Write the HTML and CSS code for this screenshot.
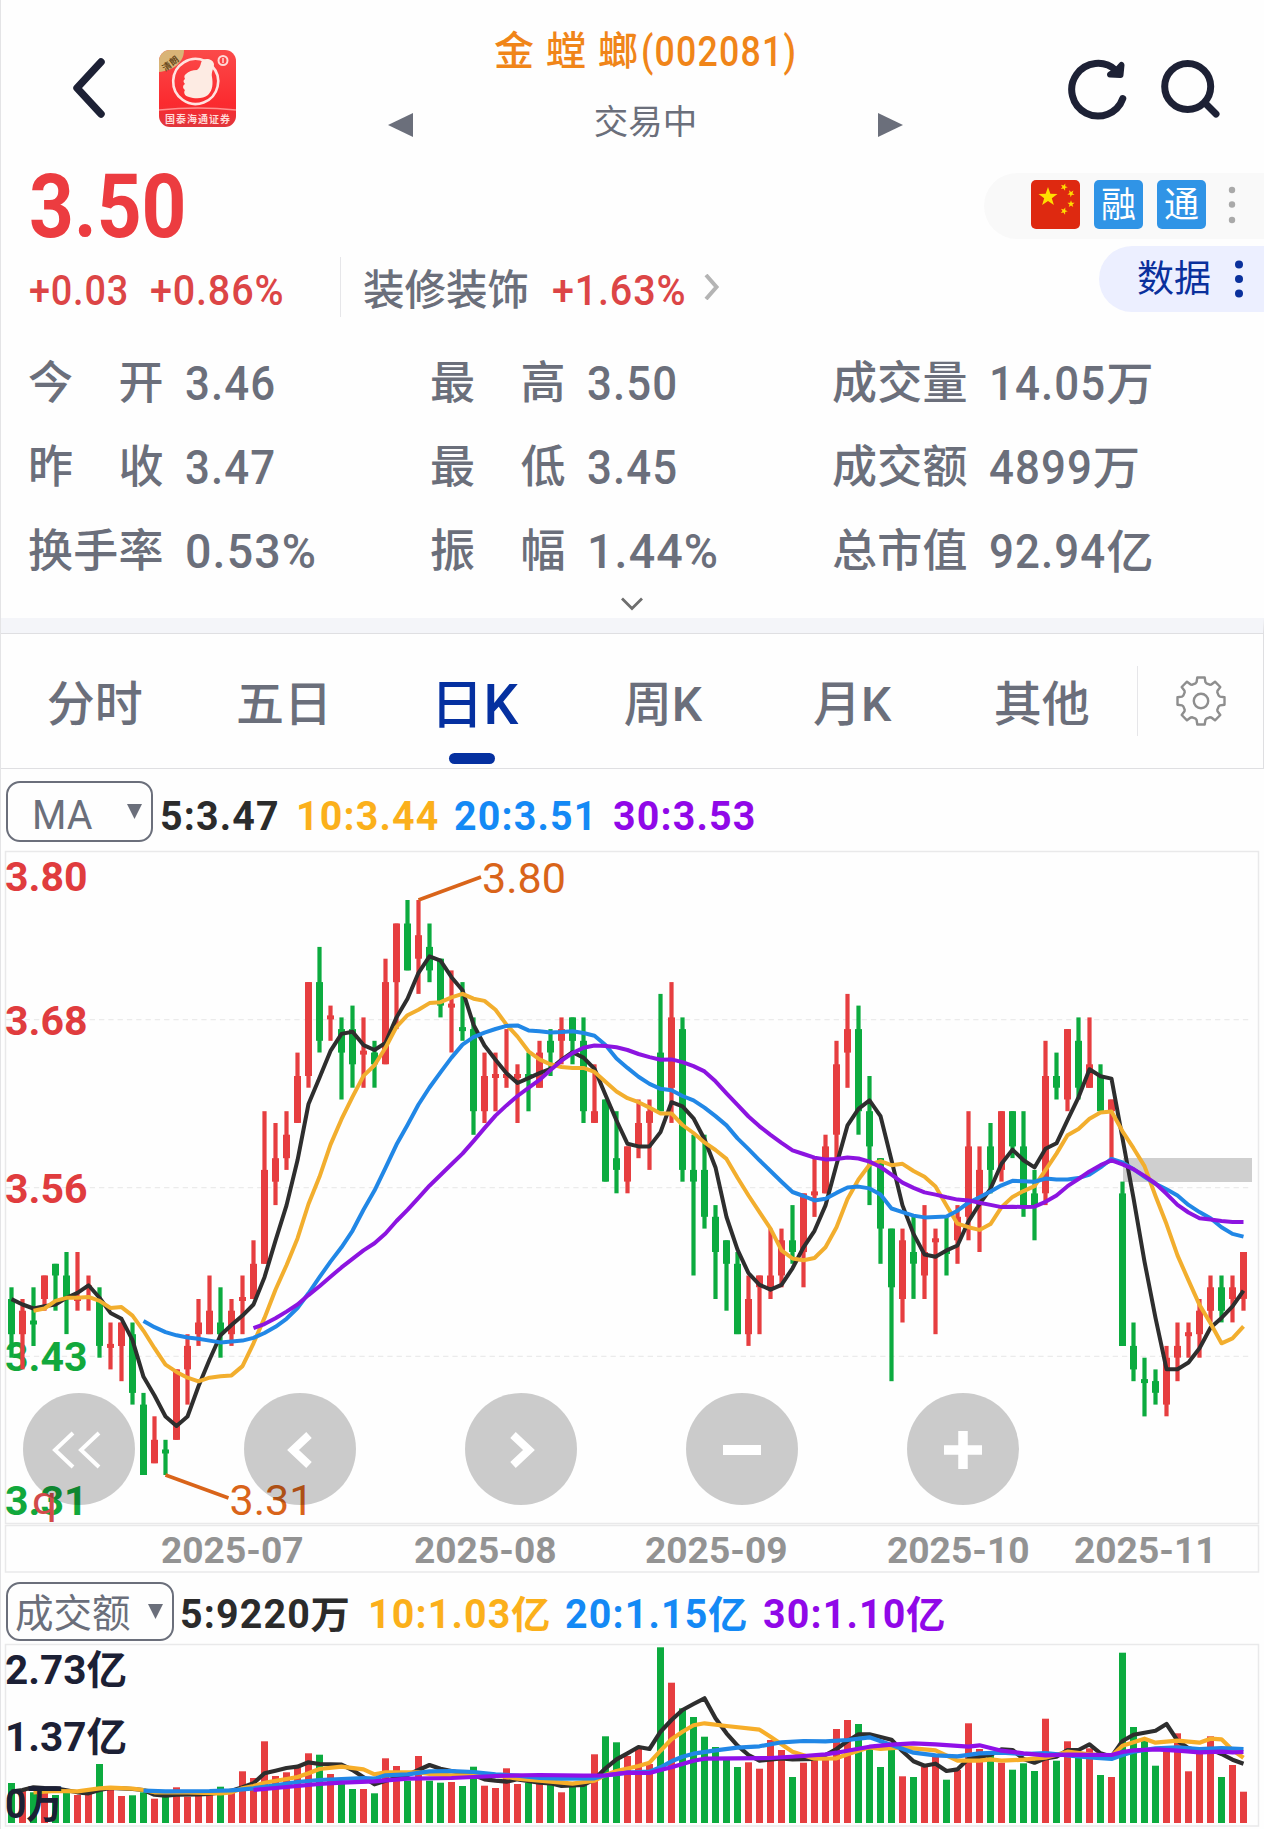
FILE: index.html
```html
<!DOCTYPE html>
<html lang="zh-CN">
<head>
<meta charset="utf-8">
<title>金螳螂 002081</title>
<link rel="stylesheet" href="styles.css">
</head>
<body>
<div class="app">
  <header class="top">
    <div class="top-left">
      <svg class="back" width="34" height="62" viewBox="0 0 34 62"><path d="M30 5 6 31 30 57" fill="none" stroke="#1d2135" stroke-width="7.500" stroke-linecap="round" stroke-linejoin="round"/></svg>
      <svg class="logo" width="77" height="77" viewBox="0 0 77 77">
        <defs>
          <linearGradient id="lg" x1="0" y1="0" x2="0" y2="1"><stop offset="0" stop-color="#fb4a4a"/><stop offset=".7" stop-color="#fb2a2f"/><stop offset="1" stop-color="#e0363c"/></linearGradient>
          <clipPath id="lc"><rect width="77" height="77" rx="11"/></clipPath>
        </defs>
        <g clip-path="url(#lc)">
          <rect width="77" height="77" fill="url(#lg)"/>
          <path d="M0 0H25C25 14 12 21 0 22Z" fill="#d9b477"/>
          <text x="2" y="19" class="logo-tag" transform="rotate(-38 8 14)">清朗</text>
          <path d="M46 11A22.500 22.500 0 1 0 53 16" fill="none" stroke="#ffe3e0" stroke-width="2.600"/>
          <path d="M27 24q4-4 11-4 3-2 4-7c1-6 12-5 13 1 0 4-3 8-2 13 1 6 1 13-4 18-5 4-13 4-19 2-4-1-6-4-4-7-3-2-2-5 0-6-2-2-2-4 0-5-1-2-1-4 1-5Z" fill="#fdebe3"/>
          <circle cx="64" cy="10.500" r="4.500" fill="none" stroke="#ffd9d6" stroke-width="2"/><path d="M64 8v5" stroke="#ffd9d6" stroke-width="1.500"/>
          <path d="M0 60Q39 56 77 60" fill="none" stroke="#ff8f8f" stroke-width="1.500"/>
          <text x="6" y="72.500" class="logo-name" textLength="65">国泰海通证券</text>
        </g>
      </svg>
    </div>
    <div class="top-mid">
      <h1 class="title"><span class="cn">金</span><span class="cn">螳</span><span class="cn">螂</span><span class="code">(002081)</span></h1>
      <div class="switch">
        <svg width="25" height="24" viewBox="0 0 25 24"><path d="M25 0V24L0 12Z" fill="#6b6f7b"/></svg>
        <span class="status">交易中</span>
        <svg width="25" height="24" viewBox="0 0 25 24"><path d="M0 0V24L25 12Z" fill="#6b6f7b"/></svg>
      </div>
    </div>
    <div class="top-right">
      <svg width="60" height="64" viewBox="1067 57 60 64" fill="none" stroke="#1d2135" stroke-width="7" stroke-linecap="round" stroke-linejoin="round"><path d="M1122.800 98.500A26.300 26.300 0 1 1 1116 70.500"/><path d="M1121.500 65 1120.500 75 1110 74.500 1117 70Z" stroke-width="6" fill="#1d2135"/></svg>
      <svg width="60" height="64" viewBox="1160 57 60 64" fill="none" stroke="#1d2135" stroke-width="7" stroke-linecap="round"><circle cx="1187.700" cy="86.500" r="23"/><path d="M1206 104 1216 114"/></svg>
    </div>
  </header>

  <section class="quote">
    <div class="quote-left">
      <div class="price">3.50</div>
      <div class="change">
        <span class="chg c1">+0.03</span><span class="chg c2">+0.86%</span>
        <span class="industry">装修装饰</span><span class="chg c3">+1.63%</span>
        <svg class="more" width="17" height="26" viewBox="0 0 17 26"><path d="M3 1 13.500 13 3 25" fill="none" stroke="#b4b4b4" stroke-width="4"/></svg>
      </div>
    </div>
    <div class="quote-right">
      <div class="tags">
        <svg width="49" height="49" viewBox="0 0 49 49"><defs><path id="star" d="M0-10 2.350-3.240 9.510-3.090 3.800 1.240 5.880 8.090 0 4-5.880 8.090-3.800 1.240-9.510-3.090-2.350-3.240Z" fill="#ffde00"/></defs><rect width="49" height="49" rx="5" fill="#de2910"/><use href="#star" transform="translate(17 17)"/><use href="#star" transform="translate(33 7) rotate(20) scale(.38)"/><use href="#star" transform="translate(40 13.500) rotate(40) scale(.38)"/><use href="#star" transform="translate(40 24) scale(.38)"/><use href="#star" transform="translate(33 31) rotate(20) scale(.38)"/></svg>
        <span class="tag">融</span><span class="tag">通</span>
        <svg class="dots" width="8" height="38" viewBox="0 0 8 38" fill="#a9a9a9"><circle cx="4" cy="4" r="3.200"/><circle cx="4" cy="18.500" r="3.200"/><circle cx="4" cy="34" r="3.200"/></svg>
      </div>
      <div class="data-btn"><span>数据</span><svg width="10" height="38" viewBox="0 0 10 38" fill="#0a309c"><circle cx="5" cy="4.500" r="4"/><circle cx="5" cy="19" r="4"/><circle cx="5" cy="33.500" r="4"/></svg></div>
    </div>
  </section>

  <section class="stats">
    <dl><dt><i>今</i><i>开</i></dt><dd>3.46</dd></dl>
    <dl><dt><i>最</i><i>高</i></dt><dd>3.50</dd></dl>
    <dl><dt><i>成</i><i>交</i><i>量</i></dt><dd>14.05<b>万</b></dd></dl>
    <dl><dt><i>昨</i><i>收</i></dt><dd>3.47</dd></dl>
    <dl><dt><i>最</i><i>低</i></dt><dd>3.45</dd></dl>
    <dl><dt><i>成</i><i>交</i><i>额</i></dt><dd>4899<b>万</b></dd></dl>
    <dl><dt><i>换</i><i>手</i><i>率</i></dt><dd class="pct">0.53%</dd></dl>
    <dl><dt><i>振</i><i>幅</i></dt><dd class="pct">1.44%</dd></dl>
    <dl><dt><i>总</i><i>市</i><i>值</i></dt><dd>92.94<b>亿</b></dd></dl>
    <svg class="expand" width="24" height="14" viewBox="0 0 24 14"><path d="M2 1.500 12 11.500 22 1.500" fill="none" stroke="#6e6e6e" stroke-width="2.800"/></svg>
  </section>

  <nav class="tabs">
    <a class="tab">分时</a><a class="tab">五日</a><a class="tab active">日<span>K</span></a><a class="tab">周K</a><a class="tab">月K</a><a class="tab">其他</a>
    <span class="gear"><svg width="52" height="52" viewBox="-26 -26 52 52" fill="none" stroke="#8e8e8e" stroke-width="2.400" stroke-linejoin="round"><path id="gear"/><circle r="7.200"/></svg></span>
  </nav>

  <div class="legend ma">
    <div class="select"><span>MA</span><svg width="15" height="15" viewBox="0 0 15 15"><path d="M0 0H15L7.500 15Z" fill="#6b6f7b"/></svg></div>
    <span class="k">5:3.47</span><span class="o">10:3.44</span><span class="b">20:3.51</span><span class="p">30:3.53</span>
  </div>

  <div class="chart">
    <svg id="kline" width="1264" height="724" viewBox="0 850 1264 724"></svg>
    <div class="controls">
      <button><svg viewBox="-56 -56 112 112"><path d="M-6-16-24 1-6 18M20-16 2 1 20 18" stroke-width="4"/></svg></button>
      <button><svg viewBox="-56 -56 112 112"><path d="M9-14-7 1 9 16" stroke-width="8"/></svg></button>
      <button><svg viewBox="-56 -56 112 112"><path d="M-8-14 8 1-8 16" stroke-width="8"/></svg></button>
      <button><svg viewBox="-56 -56 112 112"><path d="M-19 1H19" stroke-width="10"/></svg></button>
      <button><svg viewBox="-56 -56 112 112"><path d="M-19 1H19M0-18V20" stroke-width="9.500"/></svg></button>
    </div>
  </div>

  <div class="legend vol">
    <div class="select"><span>成交额</span><svg width="15" height="15" viewBox="0 0 15 15"><path d="M0 0H15L7.500 15Z" fill="#6b6f7b"/></svg></div>
    <span class="k">5:9220<em>万</em></span><span class="o">10:1.03<em>亿</em></span><span class="b">20:1.15<em>亿</em></span><span class="p">30:1.10<em>亿</em></span>
  </div>
  <svg id="volume" width="1264" height="186" viewBox="0 1643 1264 186"></svg>
</div>
<script src="chart.js"></script>
</body>
</html>
```
FILE: styles.css
```css
* { box-sizing: border-box; }
body { margin: 0; background: #fff; font-family: Roboto, "Noto Sans CJK SC", sans-serif; color: #6b6f7b; }
.app { width: 1264px; height: 1829px; overflow: hidden; border-left: 1px solid #e4e4e6; background: #fefefe; }
.app > * { margin-left: -1px; }
svg { display: block; flex: none; }
i, em { font-style: normal; }

.top { display: grid; grid-template-columns: 388px 515px 1fr; height: 160px; }
.top-left { display: flex; gap: 51px; padding: 50px 0 0 71px; }
.back { margin: 7px 3px 0 0; }
.logo-tag { font: 700 9px "Noto Sans CJK SC", sans-serif; fill: #6a4a20; }
.logo-name { font: 700 10px "Noto Sans CJK SC", sans-serif; fill: #ffd9d6; }
.top-mid { padding-top: 22px; }
.title { display: flex; align-items: center; height: 58px; margin: 0 0 0 106px; font-size: 42px; font-weight: 500; line-height: 58px; color: #f08519; }
.title .cn { width: 52px; padding-top: 2px; font-size: 40px; }
.title .code { letter-spacing: 1.4px; padding-top: 1px; transform: scaleX(.85); transform-origin: 0 50%; margin-left: -9px; }
.switch { display: flex; justify-content: space-between; align-items: center; height: 50px; margin-top: 20px; }
.status { font-size: 34.500px; line-height: 44px; padding-bottom: 6px; }
.top-right { display: flex; gap: 33px; padding: 57px 0 0 164px; }

.quote { display: flex; justify-content: space-between; height: 180px; }
.quote-left { padding: 2px 0 0 29px; }
.price { height: 90px; font-size: 89px; font-weight: 700; line-height: 90px; color: #ec3c40; transform: scaleX(.88); transform-origin: 0 50%; }
.change { display: flex; align-items: center; height: 60px; margin-top: 5px; font-size: 42px; }
.chg { padding-top: 6px; font-weight: 500; color: #dc4546; transform: scaleX(.94); transform-origin: 0 50%; letter-spacing: .9px; white-space: nowrap; }
.chg.c1 { width: 121px; transform: scaleX(.9); }
.chg.c2 { width: 190px; }
.chg.c3 { width: 130px; }
.industry { height: 60px; width: 212px; padding-left: 22px; border-left: 1px solid #e6e6e9; font-size: 41.500px; font-weight: 500; line-height: 67px; }
.more { margin: 0 0 0 21px; }
.quote-right { display: flex; flex-direction: column; align-items: flex-end; padding-top: 13px; gap: 7px; }
.tags { display: flex; align-items: center; gap: 14px; width: 280px; height: 66px; padding: 0 0 3px 47px; background: #f9f9f9; border-radius: 33px 0 0 33px; }
.tag { width: 49px; height: 49px; border-radius: 5px; background: #3094e6; color: #fff; font-size: 35px; line-height: 52px; text-align: center; }
.dots { margin-left: 8px; }
.data-btn { display: flex; align-items: center; gap: 23px; width: 165px; height: 66px; padding-left: 38px; background: #ecefff; border-radius: 33px 0 0 33px; color: #0a309c; font-size: 37px; line-height: 66px; }
.data-btn span { padding-top: 2px; }

.stats { position: relative; display: grid; grid-template-columns: 402px 402px 1fr; grid-template-rows: repeat(3, 84px); height: 278px; padding-left: 28px; }
.stats dl { display: flex; align-items: center; margin: 0; height: 84px; }
.stats dt { display: flex; justify-content: space-between; width: 135.500px; font-size: 45px; font-weight: 500; line-height: 84px; padding-top: 4px; }
.stats dd { margin: 4px 0 0 21px; font-size: 49px; font-weight: 500; line-height: 80px; letter-spacing: 1.200px; white-space: nowrap; transform: scaleX(.895); transform-origin: 0 50%; }
.stats .pct { transform: scaleX(.95); }
.stats b { display: inline-block; font-size: 46px; font-weight: 500; transform: scaleX(1.150); transform-origin: 0 50%; }
.expand { position: absolute; left: 620px; bottom: 7px; }

.tabs { display: flex; height: 151px; border: 1px solid #dfdfe2; border-top: 15px solid #f4f5f9; box-shadow: inset 0 1px #dfdfe2; }
.tab { width: 189.400px; padding: 37px 2px 0 0; font-size: 48px; font-weight: 500; line-height: 70px; text-align: center; }
.tab.active { position: relative; font-size: 53px; color: #0530a0; padding-right: 0; white-space: nowrap; }
.tab.active span { display: inline-block; font-size: 55px; }
.tab.active::after { content: ""; position: absolute; left: 69px; top: 120px; width: 46px; height: 11px; border-radius: 5.500px; background: #0530a0; }
.gear { flex: 1; display: flex; align-items: center; justify-content: center; height: 70px; margin-top: 33px; border-left: 1px solid #e6e6e9; }

.legend { display: grid; align-items: center; font-size: 41px; font-weight: 700; white-space: nowrap; }
.legend.ma { grid-template-columns: 159.500px 136px 158px 159px 1fr; height: 81px; padding-top: 4px; }
.legend.vol { grid-template-columns: 180px 187.500px 197px 198px 1fr; height: 70px; padding-top: 6px; }
.legend > span { transform: scaleX(.96); transform-origin: 0 50%; letter-spacing: 1.2px; padding-top: 8px; }
.legend em { display: inline-block; font-size: 38px; font-weight: 700; transform: scaleX(1.08); transform-origin: 0 50%; }
.legend.vol > span { padding-top: 0; }
.select { display: flex; align-items: center; justify-content: space-between; height: 61px; width: 147px; margin-left: 6px; padding: 0 9px 0 24px; border: 2px solid #6b6f7b; border-radius: 14px; font-weight: 400; font-size: 41px; }
.select span { padding-top: 6px; transform: scaleX(.96); transform-origin: 0 50%; }
.vol .select { width: 168px; height: 59px; padding-left: 7px; font-size: 38.500px; line-height: 50px; }
.vol .select span { transform: none; }
.k { color: #2b2b2b; } .o { color: #fbb01b; } .b { color: #1489f5; } .p { color: #9008e8; }

.chart { position: relative; height: 723px; }
.controls { position: absolute; left: 22.500px; top: 543px; display: flex; gap: 109px; }
.controls button { width: 112px; height: 112px; padding: 0; border: 0; border-radius: 50%; background: rgba(0, 0, 0, .2); }
.controls svg { width: 112px; height: 112px; fill: none; stroke: #fff; }
.axis { font: 700 40px Roboto, "Noto Sans CJK SC", sans-serif; }
.date { font: 700 36.500px Roboto, sans-serif; fill: #939393; }
.note { font: 400 43px Roboto, sans-serif; fill: #d9641a; }
.mark { font: 400 39px Roboto, sans-serif; fill: #d24a4a; }
```
FILE: chart.js
```js
const RED = '#e63e40', GREEN = '#0cab3f';
const X = i => 11.5 + 11 * i;
const f = n => n.toFixed(1);

// One entry per day: colour, then high, body top, body bottom, low in cents below 3.80.
const days = `G33,34,37,39 R34,35,37,40 G33,36,36,38 R32,32,34,35 G31,31,32,35 G30,32,34,37 R30,34,34,35 R32,33,33,35 G33,34,38,39 R36,38,38,40
R36,36,38,41 G36,37,42,43 G42,43,49,49 R44,46,48,48 G46,47,47,49 R40,40,46,46 R37,38,40,43 R34,36,37,38 R32,35,37,37 G33,36,37,39
R34,35,37,38 R32,34,34,37 R29,31,34,34 R18,23,31,31 R19,22,24,26 R18,20,22,23 R13,15,19,19 R7,7,15,16 G4,7,12,13 R9,10,10,12
G10,11,13,17 G9,11,14,16 R10,13,13,16 G12,13,14,16 R5,7,14,14 R2,2,7,11 G0,2,6,6 R0,3,5,8 G2,4,6,7 G5,5,9,10
R6,9,9,13 G7,11,11,12 G10,11,18,20 R13,15,18,19 R13,15,15,18 R11,15,15,16 R14,15,15,19 G13,15,15,18 R12,13,16,16 G11,12,13,15
R10,11,12,14 G10,10,12,14 G10,12,18,19 R14,18,19,19 G17,17,24,24 G18,22,23,25 R21,21,24,25 R17,19,21,22 R17,18,19,23 G8,13,18,18
R7,10,16,19 G10,11,23,24 G20,23,24,32 G20,23,27,28 G26,27,30,34 G29,29,31,35 G30,31,37,37 R32,34,37,38 R32,32,33,37 R28,32,33,34
R28,29,32,33 G26,29,30,31 R25,25,30,33 R22,25,25,27 R20,21,25,25 R12,14,20,22 R8,11,13,16 G9,11,18,20 G15,18,21,26 G22,22,28,31
G28,28,33,41 R28,29,34,36 G27,30,31,34 R26,30,32,34 R28,29,29,37 G27,30,30,32 R26,27,29,31 R18,21,27,29 R21,23,26,30 G19,21,23,25
R18,18,23,24 G18,18,21,22 G18,21,26,27 G23,25,26,29 R12,15,25,26 G13,15,16,17 R11,11,17,18 G10,12,16,17 R10,14,16,16 G14,15,18,18
R17,17,18,22 G24,25,38,38 G36,38,40,41 G39,41,41,44 G40,41,42,43 R38,39,43,44 R36,38,39,41 R36,37,37,39 R34,35,37,39 R32,33,35,36
G32,33,35,36 R32,33,34,36 R30,30,34,35`.split(/\s+/).map(s => [s[0], ...s.slice(1).split(',').map(Number)]);
const P = n => 900 + n * 11.735;

const priceMA = [
  ['#2e2e2e', 0, [1006,1018,1027,1022,1018,1003,992,975,1003,1037,1050,1098,1180,1222,1269,1290,1269,1201,1142,1087,1064,1043,1018,957,875,796,695,569,510,450,412,407,437,448,432,375,333,275,238,248,285,314,391,438,470,500,522,511,500,490,470,453,465,490,549,606,658,664,664,632,565,574,601,648,711,822,895,948,974,985,974,937,890,853,796,705,617,580,561,596,695,796,860,906,911,897,886,832,793,759,703,671,695,711,669,657,605,554,491,507,512,646,780,922,1048,1163,1163,1148,1116,1070,1048,1022,987]],
  ['#f2ae2e', 2, [1032,1027,1010,1003,1003,1001,1010,1026,1024,1043,1077,1116,1153,1169,1182,1190,1182,1179,1177,1156,1105,1048,985,930,870,793,732,660,603,553,506,482,443,396,370,358,343,341,330,322,333,338,358,391,418,451,469,480,486,488,488,497,519,541,556,565,577,590,590,616,634,655,672,692,734,774,811,848,897,915,919,914,890,845,782,738,705,697,706,703,719,732,754,796,837,845,851,838,800,777,764,753,717,680,639,625,602,588,586,630,668,708,775,838,908,964,1019,1060,1105,1094,1067]],
  ['#2187e6', 12, [1055,1069,1080,1087,1092,1095,1099,1103,1101,1099,1093,1082,1068,1050,1026,993,957,922,890,853,806,763,712,660,616,570,532,498,465,436,419,409,401,394,393,404,406,409,408,406,410,416,437,467,488,508,524,535,538,551,561,577,596,617,646,670,695,719,743,766,775,785,781,768,756,754,758,772,803,811,819,823,822,821,808,790,778,765,751,741,742,743,736,738,738,735,727,711,692,700,715,732,748,760,774,795,811,825,845,860,866]],
  ['#8c14e0', 22, [1071,1062,1049,1034,1018,997,977,956,935,916,897,881,859,831,806,779,752,728,704,680,652,623,595,572,551,533,515,493,472,455,443,438,439,442,448,457,464,470,469,475,484,496,518,545,571,597,619,638,656,673,681,689,693,692,689,691,698,710,727,745,757,767,772,778,783,785,790,795,800,799,800,799,788,774,753,737,720,706,695,704,715,730,747,770,795,812,825,828,831,833,833]]
];

const rect = (x, y, w, h, c, extra = '') => `<rect x="${f(x)}" y="${f(y)}" width="${f(w)}" height="${f(h)}" fill="${c}" ${extra}/>`;
const line = (pts, c, w = 4) => `<polyline points="${pts.map(p => p.map(f).join()).join(' ')}" fill="none" stroke="${c}" stroke-width="${w}" stroke-linejoin="round"/>`;
const text = (cls, x, y, w, s, c) => `<text class="${cls}" x="${x}" y="${y}" textLength="${w}" lengthAdjust="spacingAndGlyphs" ${c ? `fill="${c}"` : ''}>${s}</text>`;
const frame = (y, h) => `<rect x="5.500" y="${y}" width="1253" height="${h}" fill="none" stroke="#e9e9ea" stroke-width="1.500"/>`;

let k = frame(851.5, 672) + frame(1525.5, 46.5);
for (const y of [1019.6, 1187.7, 1356.3]) k += `<path d="M6 ${y}H1252" stroke="#ebebeb" stroke-width="1.300" stroke-dasharray="5.300 4"/>`;
k += rect(1123, 1158, 129, 24, '#cfcfcf');
const axis = [[891, '3.80', '#e03c3e'], [1034.5, '3.68', '#e03c3e'], [1203, '3.56', '#e03c3e'], [1371, '3.43', '#12a83c'], [1514.5, '3.31', '#12a83c']];
for (const [y, s, c] of axis) k += text('axis', 5, y, 82.5, s, c);
days.forEach(([c, h, a, b, l], i) => {
  const col = c === 'R' ? RED : GREEN, x = X(i);
  k += rect(x - 2.1, P(h), 4.2, P(l) - P(h), col);
  k += a === b ? rect(x - 3.5, P(a) - 2, 7, 4, col) : rect(x - 3.5, P(a), 7, P(b) - P(a), col);
});
for (const [c, s, v] of priceMA) k += line(v.map((y, j) => [X(s + j), 850 + y / 2.24]), c);
k += line([[418.5, 900], [481, 877]], '#d9641a', 3.5) + line([[165.5, 1475], [228.5, 1498]], '#d9641a', 3.5);
k += text('note', 482, 892.5, 84, '3.80') + text('note', 229.5, 1514.5, 84, '3.31');
k += text('mark', 32, 1514, 25, 'q');
[[161, '07'], [414, '08'], [645, '09'], [887, '10'], [1074, '11']].forEach(([x, m]) => k += text('date', x, 1563, 142.5, '2025-' + m));
document.getElementById('kline').innerHTML = k;

// Turnover: top edge of each bar and the averages, in thirds of a pixel from the axis origin.
const V = v => 1540 + v / 3;
const tops = [729,750,757,757,765,757,765,757,672,748,768,766,757,776,766,742,770,762,765,740,758,694,714,604,708,697,682,640,644,702,730,747,747,760,655,678,722,648,722,728,726,738,680,737,744,685,732,728,730,732,757,732,732,643,589,607,648,624,672,322,428,505,531,590,621,655,681,667,686,600,630,711,668,650,655,567,540,552,625,681,620,709,711,680,650,719,690,550,627,640,668,689,670,693,536,662,604,640,625,705,711,338,561,597,677,630,580,694,640,589,711,675,755];
const volMA = [
  ['#2e2e2e', '0:755 1:750 2:742 3:744 4:745 5:751 6:757 7:760 8:750 9:744 10:745 11:747 12:750 13:764 14:767 15:764 17:763 18:762 19:757 20:752 21:742 22:730 23:700 24:692 25:684 26:680 27:667 28:672 30:674 31:690 32:712 33:733 34:722 36:705 37:690 38:675 39:686 41:700 42:705 43:718 44:722 45:725 46:718 48:728 49:730 50:738 52:735 53:718 54:685 55:658 56:640 57:621 58:627 59:575 60:540 61:510 62:492 63:475 64:535 65:580 66:617 67:645 68:662 70:655 71:658 73:657 74:645 75:627 76:603 77:583 78:583 80:599 81:634 82:664 83:677 84:671 85:693 86:688 87:656 89:645 90:628 91:630 92:657 93:668 94:655 95:650 96:630 97:630 98:613 99:640 100:650 101:603 102:584 103:578 104:572 105:552 106:602 107:625 108:632 109:628 110:642 111:659 112:671'],
  ['#f7ae29', '2:757 4:753 6:754 8:745 9:743 11:746 12:750 13:757 16:757 19:760 20:757 21:745 22:738 23:728 25:717 26:711 27:700 28:687 30:680 32:688 33:703 34:697 37:697 38:702 40:706 44:706 46:716 48:722 51:731 53:722 54:705 55:693 57:678 58:668 59:632 60:598 61:575 62:556 63:550 65:558 68:569 69:590 71:635 73:656 75:655 76:643 78:622 79:627 81:622 84:631 86:662 88:662 89:658 90:662 92:659 94:653 96:635 98:643 100:648 101:617 103:596 104:608 106:602 108:608 109:596 110:598 111:630 112:653'],
  ['#2187e6', '12:752 14:754 18:753 20:751 22:745 24:736 26:726 28:720 32:714 33:716 34:706 36:703 38:694 40:693 42:696 44:703 46:707 48:714 50:716 53:715 54:706 56:698 58:695 59:682 60:664 61:650 62:641 64:631 66:623 68:619 70:607 72:603 74:604 76:600 78:592 80:615 82:638 84:646 86:649 88:640 90:638 92:642 94:639 96:646 98:652 100:657 101:645 102:635 104:625 106:622 108:627 110:624 112:627'],
  ['#9010e8', '22:750 24:744 26:738 28:732 30:728 33:724 36:716 40:714 44:708 48:705 52:707 54:706 56:698 58:699 59:690 60:682 62:662 63:656 69:654 72:648 74:643 75:638 77:626 78:620 80:614 82:610 84:613 87:620 88:616 90:632 92:640 94:646 96:644 100:645 101:636 102:631 104:628 106:632 108:637 110:635 111:637 112:636']
];
let v = frame(1644.5, 181.5);
tops.forEach((t, i) => v += rect(X(i) - 3.5, V(t), 7, 1823 - V(t), days[i][0] === 'R' ? RED : GREEN));
for (const [c, s] of volMA) v += line(s.split(' ').map(p => p.split(':').map(Number)).map(([i, y]) => [X(i), V(y)]), c, 4.2);
v += text('axis', 5, 1683.5, 122, '2.73亿', '#1c2035') + text('axis', 5, 1750.5, 122, '1.37亿', '#1c2035') + text('axis', 5, 1818, 58, '0万', '#1c2035');
document.getElementById('volume').innerHTML = v;

// Eight-toothed settings wheel.
const pts = [];
for (let t = 0; t < 8; t++) for (const [d, r] of [[-17, 18.5], [-13, 19.5], [-9, 23.8], [9, 23.8], [13, 19.5], [17, 18.5]]) {
  const a = (t * 45 + d) * Math.PI / 180;
  pts.push(f(r * Math.sin(a)) + ' ' + f(-r * Math.cos(a)));
}
document.getElementById('gear').setAttribute('d', 'M' + pts.join('L') + 'Z');
```
